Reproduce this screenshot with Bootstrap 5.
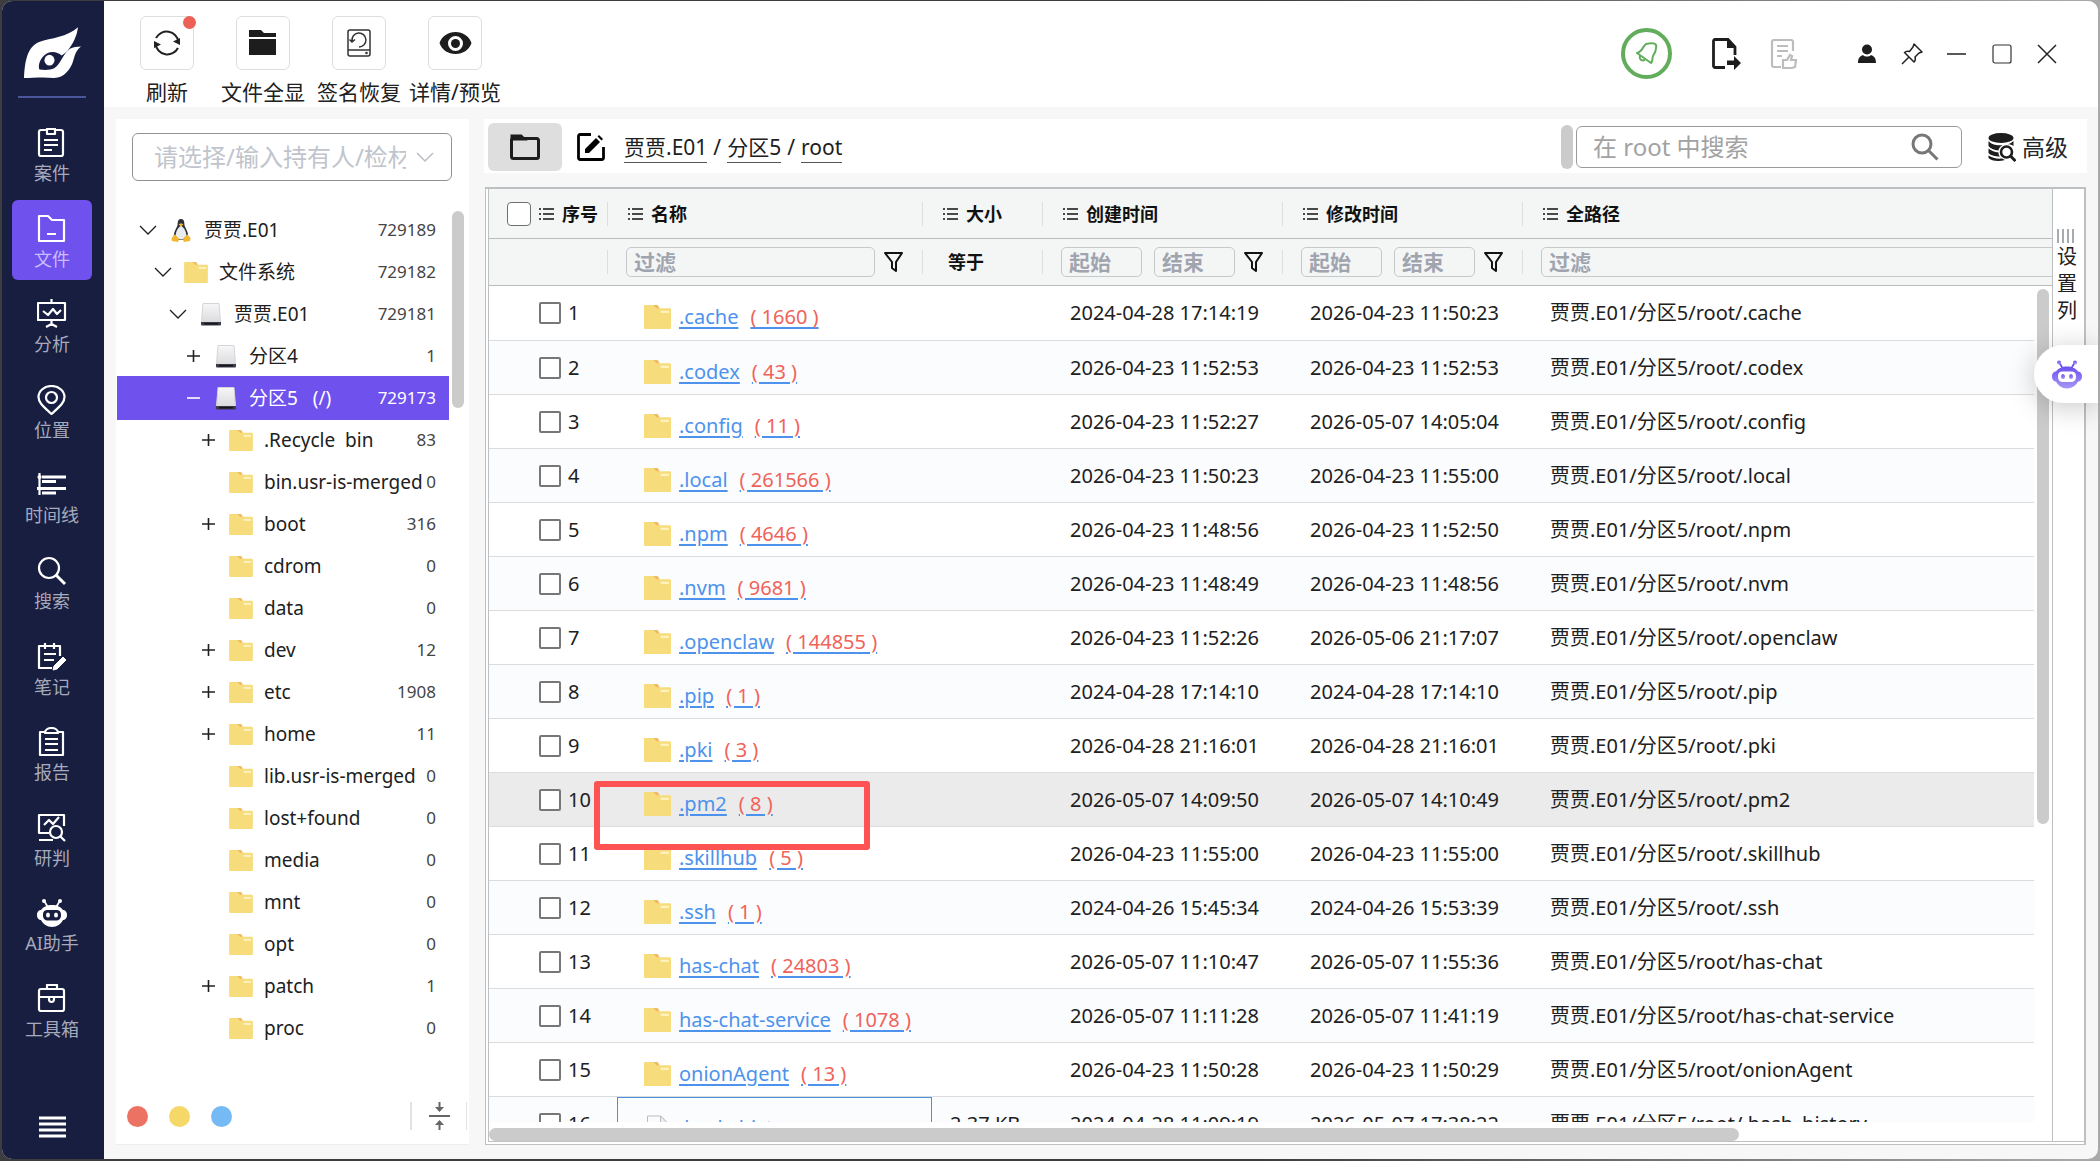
<!DOCTYPE html>
<html lang="zh-CN">
<head>
<meta charset="utf-8">
<meta name="viewport" content="width=device-width, initial-scale=1">
<title>文件 - root</title>
<link href="https://cdn.jsdelivr.net/npm/bootstrap@5.3.0/dist/css/bootstrap.min.css" rel="stylesheet">
<style>
:root{--navy:#171e40;--violet:#6f51ee;--line:#bdc1c4;--thumb:#cbcbcb;--ink:#202020}
body{font-family:"Noto Sans","Noto Sans CJK SC",sans-serif;font-size:20px;line-height:28px;color:var(--ink);
  background:linear-gradient(90deg,#3d3d3f 0,#3d3d3f 60%,#a9a9a9 99%);overflow:hidden}
button,input,select{font-family:inherit}
svg{display:block;flex:none}
.app-window{margin:1px 2px 2px;height:calc(100vh - 3px);border-radius:10px;overflow:hidden;background:#f7f7f7}
/* side navigation */
.side-nav{width:102px;padding-right:2px;background:var(--navy);color:#fff}
.side-logo{padding:26px 0 17px}
.side-rule{width:68px;height:2px;background:#4b559b}
.side-items{margin:16px 0 65px}
.side-link{width:80px;height:80px;border-radius:6px;color:#a6aabb;font-size:18px;line-height:24px;text-decoration:none;padding-top:14px;gap:3px}
.side-link svg{color:#fff}
.side-link.active{background:var(--violet);color:#c9bffa}
.side-menu{margin-bottom:20px;color:#fff}
/* top bar */
.top-bar{background:#fff;height:106px;padding:15px 29px 0 15px}
.tool-item{width:96px;font-size:21px;line-height:28px;gap:8px;white-space:nowrap}
.tool-btn{width:54px;height:54px;border:1px solid #dedede;border-radius:6px}
.tool-dot{width:13px;height:13px;background:#ec6055;top:-1px;right:-3px}
.win-btns{height:75px}
.export-btn{margin-left:40px}
.review-btn{margin:0 20px 0 24px}
.notify-btn{width:51px;height:51px;border:4px solid #62ad5c;color:#62ad5c}
.win-ctl{width:45px;height:45px}
/* tree panel */
.main-area{padding:12px 11px 14px 12px;gap:15px}
.tree-panel{width:353px;background:#fff;border-bottom:1px solid #eee}
.owner-select{margin:14px 17px 0 16px;height:48px;width:320px;border:1px solid #8f9296;border-radius:6px;font-size:24px;line-height:32px;color:#c0c4cc;padding:0 45px 0 21px;background-size:18px 18px;background-position:right 17px center;
  background-image:url("data:image/svg+xml,%3csvg xmlns='http://www.w3.org/2000/svg' viewBox='0 0 18 18'%3e%3cpath fill='none' stroke='%23b9bcc3' stroke-width='1.5' d='M1 5l8 8 8-8'/%3e%3c/svg%3e")}
.tree-list{margin:28px 20px 0 1px;font-size:19px}
.tree-row{height:42px;padding-right:13px;white-space:nowrap}
.tree-row.active{background:var(--violet);color:#fff;box-shadow:0 -1px 0 var(--violet),0 1px 0 var(--violet)}
.tree-toggle{width:24px;height:24px;color:inherit}
.tree-icon{width:24px;margin:0 11px 0 9px}
.tree-count{font-size:17px;color:#444}
.active .tree-count{color:#fff}
.thumb-v{width:12px;border-radius:6px;background:var(--thumb);right:5px;top:92px;height:197px}
.tree-foot{height:56px;padding-left:11px}
.tag-dot{width:21px;height:21px;margin-right:21px}
.foot-end{width:57px;height:28px;border-left:2px solid #e2e2e2;border-right:1px solid #e2e2e2;margin-right:2px}
/* path bar */
.path-bar{background:#fff;height:54px;padding:2px 19px 0 4px}
.path-btn{width:74px;height:48px;background:#dedede;border-radius:6px}
.edit-btn{margin:0 19px 0 15px}
.crumbs{font-size:21px;line-height:28px}
.crumbs a{color:inherit;text-decoration:none;border-bottom:1px solid #555;padding-bottom:1px}
.crumbs span{margin:0 6px}
.bar-thumb{width:12px;height:44px;border-radius:6px;background:var(--thumb);margin-right:3px}
.find-box{width:386px;height:42px;border:1px solid #9a9a9a;border-radius:6px;padding:0 22px 0 16px}
.find-box input{font-size:24px;line-height:32px;outline:0}
.find-box input::placeholder{color:#a2a2a2;opacity:1}
.adv-btn{font-size:23px;line-height:30px;gap:6px;margin-left:26px}
/* grid */
.grid-frame{border:2px solid var(--line);border-left:1px solid var(--line);border-bottom:1px solid var(--line);background:#fff;margin:14px 1px 0}
.grid-inner{border-left:1px solid var(--line);border-bottom:1px solid var(--line);margin:0 0 2px 2px}
.file-grid{table-layout:fixed;width:100%;border-collapse:separate;border-spacing:0}
.file-grid th{background:#f4f6f6;border-bottom:1px solid #b9bcbf;font-size:18px;line-height:24px;font-weight:700;color:#111;padding:0 0 0 11px;height:50px;overflow:hidden;white-space:nowrap}
.file-grid th:first-child{padding-left:18px}
.file-grid tr.filters th{height:47px;padding-left:9px}
.th-cell{height:24px;gap:8px;border-right:1px solid #dcdfe0;margin-right:9px}
.th-cell.last{border:0}
.filters .th-cell{gap:9px}
.flt{height:30px;border:1px solid #c6c9ca;border-radius:5px;background:transparent;font-size:21px;line-height:26px;font-weight:700;padding:0 7px;min-width:0}
.flt::placeholder{color:#a0a4af;opacity:1}
.flt-name{width:249px}.flt-date{width:81px}.flt-date+.flt-date{margin-left:3px}
.flt-path{width:calc(100% + 12px)}
.flt-eq{padding-left:7px}
.file-grid td{height:54px;border-bottom:1px solid #dadcdd;padding:0 0 0 18px;white-space:nowrap}
.file-grid tbody tr:first-child td{height:55px}
.file-grid td:first-child{padding-left:50px}
.file-grid td:nth-child(2){padding:8px 0 0 27px}
.file-grid td:last-child{border:0;background:#fff!important}
.file-grid tr:nth-child(even) td{background:#fbfcfe}
.file-grid tr.hovered td{background:#ebebeb}
.file-grid td.focus-cell{border:1px solid #4b8fdd;padding:8px 0 0 26px}
.head-check,.row-check{appearance:none;background:#fff;margin:0;flex:none}
.head-check{width:24px;height:24px;border:1px solid #6f6f6f;border-radius:4px}
.row-check{width:22px;height:22px;border:2px solid #777;border-radius:2px;margin-right:7px}
.file-link{color:#4d92ec;text-decoration:none;gap:12px}
.file-link span{text-decoration:underline #4d92ec 2px;text-underline-offset:3px}
.file-link .sub-count{color:#f0635a}
.grid-thumb{width:12px;border-radius:6px;background:var(--thumb);right:3px;top:100px;height:535px}
.scroll-row{height:19px;padding-top:6px}
.scroll-row div{width:80%;height:13px;border-radius:7px;background:var(--thumb)}
.col-panel{width:32px;border-left:1px solid var(--line);padding:40px 4px 0;font-size:20px;line-height:27px}
.robot-bubble{right:0;top:344px;width:64px;height:58px;background:#fff;border-radius:29px 0 0 29px;box-shadow:0 4px 28px rgba(0,0,0,.22);padding-right:16px}
.red-frame{left:592px;top:780px;width:276px;height:69px;border:6px solid #ff5252;border-radius:3px}
</style>
<script src="https://cdn.jsdelivr.net/npm/bootstrap@5.3.0/dist/js/bootstrap.bundle.min.js"></script>
</head>
<body>
<svg width="0" height="0" class="position-absolute" aria-hidden="true">
  <defs>
    <linearGradient id="gDisk" x1="0" y1="0" x2="0" y2="1"><stop offset="0" stop-color="#f7f7f8"/><stop offset="1" stop-color="#dcdce0"/></linearGradient>
    <linearGradient id="gBot" x1="0" y1="0" x2="0" y2="1"><stop offset="0" stop-color="#6f51ee"/><stop offset="1" stop-color="#a597f6"/></linearGradient>
  </defs>
  <symbol id="folder" viewBox="0 0 26 23"><path fill="#f7dc7b" d="M1 0h12l2 3h10a1 1 0 0 1 1 1v18a1 1 0 0 1-1 1H1a1 1 0 0 1-1-1V1a1 1 0 0 1 1-1z"/><path fill="#f0b963" d="M9 0h4l2 3h-3z"/><path stroke="#fff3c4" stroke-width="2" d="M16 6.500h8"/></symbol>
  <symbol id="disk" viewBox="0 0 20 23"><path fill="url(#gDisk)" stroke="#d5d5d9" d="M2 .5h16l1.500 18.500H.5z"/><path fill="#3a3c48" d="M0 19h20v2.500a1 1 0 0 1-1 1H1a1 1 0 0 1-1-1z"/><path fill="#15161d" d="M3 20h14v1.500H3z"/></symbol>
  <symbol id="tux" viewBox="0 0 20 24"><path fill="#2b3138" d="M10 0c2.500 0 3.500 2 3.500 5 0 4 4 7 4 13 0 3-3 4-7.500 4s-7.500-1-7.500-4c0-6 4-9 4-13 0-3 1-5 3.500-5z"/><path fill="#e9edf0" d="M10 7c3 2 5.500 6 5.500 10 0 3-2.500 4.500-5.500 4.500S4.500 20 4.500 17C4.500 13 7 9 10 7z"/><path fill="#f2b632" d="M7.500 5.500l2.500-1 2.500 1L10 8zM0 20l3.500-4L8 20.500 7 24l-6.500-1zM20 20l-3.500-4-4.500 4.500 1 3.500 6.500-1z"/></symbol>
  <symbol id="paper" viewBox="0 0 22 26"><path fill="#fbfbfc" stroke="#b9bcc2" d="M1 1h13l7 7v17H1z"/><path fill="#eceef1" stroke="#b9bcc2" d="M14 1v7h7z"/></symbol>
  <symbol id="lines" viewBox="0 0 15 14"><path stroke="#111" stroke-width="1.600" d="M0 2h2M4 2h11M0 7h2M4 7h11M0 12h2M4 12h11"/></symbol>
  <symbol id="funnel" viewBox="0 0 19 21"><path fill="none" stroke="#111" stroke-width="2" stroke-linejoin="round" d="M1 1h17l-6 9v9l-4-3v-6z"/></symbol>
  <symbol id="robot" viewBox="0 0 30 28"><path fill="none" stroke="currentColor" stroke-width="1.800" d="M7.500 2.500l3 5M22.500 2.500l-3 5"/><circle cx="7" cy="2" r="2" fill="currentColor"/><circle cx="23" cy="2" r="2" fill="currentColor"/><path fill="currentColor" fill-rule="evenodd" d="M15 6c5 0 9 2 11 5 2 0 4 1.500 4 5s-2 5-4 5c-2 4-6 7-11 7s-9-3-11-7c-2 0-4-1.500-4-5s2-5 4-5c2-3 6-5 11-5zM11 11c-3 0-5 1-5 5s2 5.500 5 5.500h8c3 0 5-1.500 5-5.500s-2-5-5-5z"/><ellipse cx="11" cy="16" rx="2" ry="2.500" fill="currentColor"/><ellipse cx="19" cy="16" rx="2" ry="2.500" fill="currentColor"/></symbol>
</svg>

<div class="app-window d-flex position-relative">
  <nav class="side-nav d-flex flex-column align-items-center flex-shrink-0">
    <div class="side-logo"><svg width="57" height="52" viewBox="75 80 170 155" fill="#fff"><path d="M75 232C78 180 85 140 120 125C155 113 205 110 236 81C232 110 222 128 207 148C200 157 193 162 187 165C172 150 145 150 130 170C118 185 118 200 121 207C140 209 155 208 165 203C185 192 190 160 212 145C222 139 232 139 245 138C230 150 228 160 222 180C215 205 195 232 165 232C130 228 100 232 75 232Z"/><ellipse cx="151" cy="179" rx="15" ry="16"/></svg></div>
    <div class="side-rule"></div>
    <div class="side-items flex-grow-1 d-flex flex-column justify-content-between" id="sideItems"></div>
    <button class="side-menu btn p-0 border-0" aria-label="菜单"><svg width="27" height="24" stroke="#fff" stroke-width="3"><path d="M0 3h27M0 9h27M0 15h27M0 21h27"/></svg></button>
  </nav>

  <div class="flex-grow-1 d-flex flex-column overflow-hidden">
    <header class="top-bar d-flex justify-content-between flex-shrink-0">
      <div class="d-flex">
        <div class="tool-item d-flex flex-column align-items-center"><button id="t1" class="tool-btn btn p-0 d-flex align-items-center justify-content-center position-relative"><svg width="28" height="28" fill="none" stroke="#222" stroke-width="2"><path d="M3 9A12 12 0 0 1 25.500 13M25 19A12 12 0 0 1 2.500 15"/><path fill="#222" stroke="none" d="M20 12.500l7 3.500V9zM8 15.500L1 12v7z"/></svg><i class="tool-dot position-absolute rounded-circle"></i></button><label for="t1">刷新</label></div>
        <div class="tool-item d-flex flex-column align-items-center"><button id="t2" class="tool-btn btn p-0 d-flex align-items-center justify-content-center"><svg width="28" height="26" fill="#1d1d1d"><path d="M0 0h12l3 3h12v4H0zM0 9h27v16H0z"/></svg></button><label for="t2">文件全显</label></div>
        <div class="tool-item d-flex flex-column align-items-center"><button id="t3" class="tool-btn btn p-0 d-flex align-items-center justify-content-center"><svg width="24" height="28" fill="none" stroke="#333" stroke-width="1.500"><rect x="1" y="1" width="22" height="26" rx="2"/><path d="M1 21h22M5 12a7 7 0 1 1 7 6M2.500 10.500L5 13l3-2.500"/><circle cx="19.500" cy="24" r=".6"/></svg></button><label for="t3">签名恢复</label></div>
        <div class="tool-item d-flex flex-column align-items-center"><button id="t4" class="tool-btn btn p-0 d-flex align-items-center justify-content-center"><svg width="33" height="24" fill="#1d1d1d"><path fill-rule="evenodd" d="M16.500 1C24 1 30 5 32.500 12 30 19 24 23 16.500 23S3 19 .5 12C3 5 9 1 16.500 1zm0 4a7.500 7.500 0 1 0 0 15 7.500 7.500 0 0 0 0-15z"/><circle cx="16.500" cy="12.500" r="4.500"/></svg></button><label for="t4">详情/预览</label></div>
      </div>
      <div class="win-btns d-flex align-items-center">
        <button class="notify-btn btn p-0 rounded-circle d-flex align-items-center justify-content-center" aria-label="通知"><svg width="24" height="24" fill="none" stroke="currentColor" stroke-width="2" stroke-linejoin="round"><path d="M2 11c5-1 6-7 9-9 4-1 9-1 10 1 1 5-1 8-3 11-1 3 0 5-2 7L2 11zM5 14c-1 4 2 5 5 4"/></svg></button>
        <button class="export-btn btn p-0 border-0" aria-label="导出"><svg width="30" height="32" viewBox="0 0 30 32"><path fill="none" stroke="#1d1d1d" stroke-width="2.800" d="M13 29.500H3a1.500 1.500 0 0 1-1.500-1.500V3A1.500 1.500 0 0 1 3 1.500h13l7 7.500v8"/><path fill="#1d1d1d" d="M15 1v9h9v-1.500L16.500 1zM15 22.500h7V18l7 7-7 7v-5h-7z"/></svg></button>
        <button class="review-btn btn p-0 border-0" aria-label="审批"><svg width="30" height="32" viewBox="0 0 30 32" fill="none" stroke="#bdbdbd" stroke-width="2.200" class="ms-1"><path d="M11 29H4a2 2 0 0 1-2-2V4a2 2 0 0 1 2-2h17a2 2 0 0 1 2 2v9M7 8h11M7 13h11M7 18h5M13 22v8h9l3-1 1-7h-5l1-4-2-1-3 5z"/></svg></button>
        <div class="d-flex ms-4">
          <button class="win-ctl btn p-0 border-0 d-flex align-items-center justify-content-center" aria-label="用户"><svg width="18" height="19" fill="#1d1d1d"><circle cx="9" cy="5.500" r="5"/><path d="M0 19c0-5 2-7 5-8 2 2 6 2 8 0 3 1 5 3 5 8z"/></svg></button>
          <button class="win-ctl btn p-0 border-0 d-flex align-items-center justify-content-center" aria-label="置顶"><svg width="22" height="22" fill="none" stroke="#222" stroke-width="1.500" stroke-linejoin="round"><path d="M13 1l8 8-3 1-4 4c1 3 0 4-1 5L3.500 9.500C5 8 7 8 8.500 8.500L12 4zM8 14l-7 7"/></svg></button>
          <button class="win-ctl btn p-0 border-0 d-flex align-items-center justify-content-center" aria-label="最小化"><svg width="19" height="20" stroke="#222" stroke-width="1.500"><path d="M0 10h19"/></svg></button>
          <button class="win-ctl btn p-0 border-0 d-flex align-items-center justify-content-center" aria-label="最大化"><svg width="20" height="20" fill="none" stroke="#333" stroke-width="1.200"><rect x="1" y="1" width="18" height="18" rx="2"/></svg></button>
          <button class="win-ctl btn p-0 border-0 d-flex align-items-center justify-content-center" aria-label="关闭"><svg width="20" height="20" stroke="#222" stroke-width="1.500"><path d="M1 1l18 18M19 1L1 19"/></svg></button>
        </div>
      </div>
    </header>

    <div class="main-area flex-grow-1 d-flex overflow-hidden">
      <aside class="tree-panel d-flex flex-column position-relative flex-shrink-0">
        <select class="owner-select form-select" aria-label="持有人/检材"><option>请选择/输入持有人/检材</option></select>
        <div class="tree-list flex-grow-1 overflow-visible" id="tree"></div>
        <div class="thumb-v position-absolute"></div>
        <div class="tree-foot d-flex align-items-center">
          <i class="tag-dot rounded-circle" style="background:#ec7263"></i><i class="tag-dot rounded-circle" style="background:#f6d869"></i><i class="tag-dot rounded-circle" style="background:#75baf5"></i>
          <button class="foot-end btn p-0 rounded-0 border-top-0 border-bottom-0 ms-auto d-flex align-items-center justify-content-center" aria-label="全部折叠"><svg width="21" height="28" fill="#666"><path d="M0 13h21v2H0zM9.500 0h2v5H15l-4.500 5L6 5h3.500zM9.500 28h2v-5H15l-4.500-5L6 23h3.500z"/></svg></button>
        </div>
      </aside>

      <main class="flex-grow-1 d-flex flex-column overflow-hidden">
        <div class="path-bar d-flex align-items-center flex-shrink-0">
          <button class="path-btn btn p-0 d-flex align-items-center justify-content-center" aria-label="目录"><svg width="30" height="26" fill="none" stroke="#1d1d1d" stroke-width="3"><path fill="#1d1d1d" d="M2 5V2h9l3 3z"/><rect x="1.500" y="4.500" width="27" height="20" rx="2"/></svg></button>
          <button class="edit-btn btn p-0 border-0" aria-label="编辑路径"><svg width="28" height="28" fill="none" stroke="#000" stroke-width="2.800"><path d="M14 1.500H3A1.500 1.500 0 0 0 1.500 3v22A1.500 1.500 0 0 0 3 26.500h22a1.500 1.500 0 0 0 1.500-1.500V14"/><path fill="#000" stroke="none" d="M8 20v-4L19 5l4 4-11 11zM20.500 3.500L22 2l4 4-1.500 1.500z"/></svg></button>
          <div class="crumbs"><a href="#">贾贾.E01</a><span>/</span><a href="#">分区5</a><span>/</span><a href="#">root</a></div>
          <div class="d-flex align-items-center ms-auto">
            <div class="bar-thumb"></div>
            <div class="find-box d-flex align-items-center"><input class="border-0 p-0 flex-grow-1 w-50" type="text" aria-label="搜索" placeholder="在 root 中搜索"><svg width="28" height="28" fill="none" stroke="#777" stroke-width="3"><circle cx="11" cy="11" r="9"/><path d="M17.500 17.500l9 9"/></svg></div>
            <button class="adv-btn btn p-0 border-0 d-flex align-items-center"><svg width="28" height="29" viewBox="0 0 28 29" fill="#1d1d1d"><ellipse cx="13" cy="5" rx="12.500" ry="5"/><path d="M.5 8c3 4 10 5 14 4-3 2-4 4-4 5.500C6 17 2 15.500.5 13zM.5 15.500c3 2.500 6 3.500 10 4 0 2 .5 3 1.500 4C7 23.500 2 22 .5 20zM.5 22.500C4 25 9 26 14 25.500l3 1.500C11 29 3 28 .5 25zM25.500 8v5c-2-1.500-5-2-7-1.500 3-.5 5-1.500 7-3.500z"/><circle cx="18.500" cy="19" r="5.500" fill="none" stroke="#1d1d1d" stroke-width="2.600"/><path stroke="#1d1d1d" stroke-width="3" d="M22.500 23l5 5"/></svg><span>高级</span></button>
          </div>
        </div>

        <div class="grid-frame flex-grow-1 d-flex overflow-hidden">
          <div class="grid-inner flex-grow-1 d-flex overflow-hidden">
            <div class="flex-grow-1 d-flex flex-column overflow-hidden position-relative">
              <div class="flex-grow-1 overflow-hidden">
                <table class="file-grid">
                  <colgroup><col style="width:128px"><col style="width:315px"><col style="width:120px"><col style="width:240px"><col style="width:240px"><col><col style="width:18px"></colgroup>
                  <thead>
                    <tr>
                      <th><div class="th-cell d-flex align-items-center"><input class="head-check" type="checkbox" aria-label="全选"><svg width="15" height="14"><use href="#lines"/></svg>序号</div></th>
                      <th><div class="th-cell d-flex align-items-center"><svg width="15" height="14"><use href="#lines"/></svg>名称</div></th>
                      <th><div class="th-cell d-flex align-items-center"><svg width="15" height="14"><use href="#lines"/></svg>大小</div></th>
                      <th><div class="th-cell d-flex align-items-center"><svg width="15" height="14"><use href="#lines"/></svg>创建时间</div></th>
                      <th><div class="th-cell d-flex align-items-center"><svg width="15" height="14"><use href="#lines"/></svg>修改时间</div></th>
                      <th colspan="2"><div class="th-cell last d-flex align-items-center"><svg width="15" height="14"><use href="#lines"/></svg>全路径</div></th>
                    </tr>
                    <tr class="filters">
                      <th><div class="th-cell"></div></th>
                      <th><div class="th-cell d-flex align-items-center"><input class="flt flt-name" placeholder="过滤" aria-label="名称过滤"><svg width="19" height="21"><use href="#funnel"/></svg></div></th>
                      <th><div class="th-cell flt-eq d-flex align-items-center">等于</div></th>
                      <th><div class="th-cell d-flex align-items-center"><input class="flt flt-date" placeholder="起始" aria-label="创建时间起始"><input class="flt flt-date" placeholder="结束" aria-label="创建时间结束"><svg width="19" height="21"><use href="#funnel"/></svg></div></th>
                      <th><div class="th-cell d-flex align-items-center"><input class="flt flt-date" placeholder="起始" aria-label="修改时间起始"><input class="flt flt-date" placeholder="结束" aria-label="修改时间结束"><svg width="19" height="21"><use href="#funnel"/></svg></div></th>
                      <th colspan="2"><input class="flt flt-path d-block" placeholder="过滤" aria-label="全路径过滤"></th>
                    </tr>
                  </thead>
                  <tbody id="rows"></tbody>
                </table>
              </div>
              <div class="scroll-row flex-shrink-0"><div></div></div>
              <div class="grid-thumb position-absolute"></div>
            </div>
            <div class="col-panel flex-shrink-0">
              <svg width="17" height="14" stroke="#8b8f92" stroke-width="1.500"><path d="M1 0v14M6 0v14M11 0v14M16 0v14"/></svg>
              <div>设<br>置<br>列</div>
            </div>
          </div>
        </div>
      </main>
    </div>
  </div>

  <button class="robot-bubble btn border-0 position-absolute d-flex align-items-center justify-content-end" aria-label="AI助手"><svg width="30" height="29" viewBox="0 0 30 28" fill="url(#gBot)"><path stroke="#6f51ee" stroke-width="1.800" d="M7.500 2.500l3 5M22.500 2.500l-3 5"/><circle cx="7" cy="2" r="2"/><circle cx="23" cy="2" r="2"/><path fill-rule="evenodd" d="M15 6c5 0 9 2 11 5 2 0 4 1.500 4 5s-2 5-4 5c-2 4-6 7-11 7s-9-3-11-7c-2 0-4-1.500-4-5s2-5 4-5c2-3 6-5 11-5zM11 11c-3 0-5 1-5 5s2 5.500 5 5.500h8c3 0 5-1.500 5-5.500s-2-5-5-5z"/><ellipse cx="11" cy="16" rx="2" ry="2.500"/><ellipse cx="19" cy="16" rx="2" ry="2.500"/></svg></button>
  <div class="red-frame position-absolute pe-none"></div>
</div>

<script>
const nav = [
  ['案件','<path d="M10 2H4a2 2 0 0 0-2 2v22a2 2 0 0 0 2 2h20a2 2 0 0 0 2-2V4a2 2 0 0 0-2-2h-6M10 1v5h8V1zM7 12h14M7 17h14M7 22h8"/>'],
  ['文件','<path d="M2 2h9l4 4h12v21H2zM10 20h9"/>'],
  ['分析','<path d="M1 4h27v17H1zM14.500 0v4M14.500 21v6M9 28l5.500-3 5.500 3M6 12l5 4 5-6 4 5 4-4"/>'],
  ['位置','<path d="M14.500 29C7 22 1.500 18 1.500 12a13 11 0 0 1 26 0c0 6-5.500 10-13 17z"/><circle cx="14.500" cy="12.500" r="5.500"/>'],
  ['时间线','<path stroke-width="3" d="M5 7h24M5 11.500h14M0 18.500h29M5 23h14"/><path d="M2.500 3v22"/><circle cx="2.500" cy="7" r="1"/>'],
  ['搜索','<circle cx="12" cy="12" r="10"/><path stroke-width="3" d="M19 19l9 9"/>'],
  ['笔记','<path d="M15 26H2V4h21v10M8 1v6M17 1v6M7 12h12M7 18h10"/><path fill="#fff" stroke-width="1" d="M16 28l1-4 9-9 3 3-9 9z"/>'],
  ['报告','<path d="M8 5H3v23h23V5h-5M8 6c0-3 3-5 6.500-5S21 3 21 6zM8 12h13M8 17h13M8 23h13"/>'],
  ['研判','<path d="M12 20H2V2h25v11M7 12l5-5 4 4 6-7M2 27h14"/><circle cx="19" cy="19" r="6"/><path d="M23 23l5 5"/>'],
  ['AI助手','bot'],
  ['工具箱','<rect x="2" y="5" width="25" height="22" rx="2"/><path d="M10 5V1h10v4M2 13h25M12 13v2a2.500 3 0 0 0 5 0v-2"/>']
];
document.getElementById('sideItems').innerHTML = nav.map(([t, p], i) =>
  `<a href="#" class="side-link d-flex flex-column align-items-center${i === 1 ? ' active' : ''}">` +
  (p === 'bot' ? '<svg width="30" height="30"><use href="#robot"/></svg>'
    : `<svg width="30" height="30" fill="none" stroke="currentColor" stroke-width="2.2" stroke-linejoin="round">${p}</svg>`) +
  `<span>${t}</span></a>`).join('');

// [level, toggle, icon, label, count]
const tree = [
  [0,'v','tux','贾贾.E01',729189],[1,'v','folder','文件系统',729182],[2,'v','disk','贾贾.E01',729181],
  [3,'+','disk','分区4',1],[3,'-','disk','分区5&nbsp;&nbsp; (/)',729173],
  [4,'+','folder','.Recycle&nbsp; bin',83],[4,'','folder','bin.usr-is-merged',0],[4,'+','folder','boot',316],
  [4,'','folder','cdrom',0],[4,'','folder','data',0],[4,'+','folder','dev',12],[4,'+','folder','etc',1908],
  [4,'+','folder','home',11],[4,'','folder','lib.usr-is-merged',0],[4,'','folder','lost+found',0],
  [4,'','folder','media',0],[4,'','folder','mnt',0],[4,'','folder','opt',0],[4,'+','folder','patch',1],[4,'','folder','proc',0]
];
const marks = {
  'v':'<path d="M4 8l8 8 8-8" stroke-width="1.3"/>',
  '+':'<path d="M6 12h13M12.500 6v12" stroke-width="1.6"/>',
  '-':'<path d="M6 12h13" stroke-width="1.6"/>'
};
document.getElementById('tree').innerHTML = tree.map(([l, m, ic, t, c]) =>
  `<div class="tree-row d-flex align-items-center${m === '-' ? ' active' : ''}" style="padding-left:${19 + 15 * l}px">` +
  (m ? `<button class="tree-toggle btn p-0 border-0" aria-label="展开"><svg width="24" height="24" fill="none" stroke="currentColor">${marks[m]}</svg></button>` : '<span class="tree-toggle"></span>') +
  `<svg class="tree-icon" height="${ic === 'folder' ? 21 : 23}"><use href="#${ic}"/></svg><span>${t}</span><span class="tree-count ms-auto">${c}</span></div>`).join('');

const files = [
  ['.cache',1660,'2024-04-28 17:14:19','2026-04-23 11:50:23'],
  ['.codex',43,'2026-04-23 11:52:53','2026-04-23 11:52:53'],
  ['.config',11,'2026-04-23 11:52:27','2026-05-07 14:05:04'],
  ['.local',261566,'2026-04-23 11:50:23','2026-04-23 11:55:00'],
  ['.npm',4646,'2026-04-23 11:48:56','2026-04-23 11:52:50'],
  ['.nvm',9681,'2026-04-23 11:48:49','2026-04-23 11:48:56'],
  ['.openclaw',144855,'2026-04-23 11:52:26','2026-05-06 21:17:07'],
  ['.pip',1,'2024-04-28 17:14:10','2024-04-28 17:14:10'],
  ['.pki',3,'2026-04-28 21:16:01','2026-04-28 21:16:01'],
  ['.pm2',8,'2026-05-07 14:09:50','2026-05-07 14:10:49'],
  ['.skillhub',5,'2026-04-23 11:55:00','2026-04-23 11:55:00'],
  ['.ssh',1,'2024-04-26 15:45:34','2024-04-26 15:53:39'],
  ['has-chat',24803,'2026-05-07 11:10:47','2026-05-07 11:55:36'],
  ['has-chat-service',1078,'2026-05-07 11:11:28','2026-05-07 11:41:19'],
  ['onionAgent',13,'2026-04-23 11:50:28','2026-04-23 11:50:29'],
  ['.bash_history',null,'2024-04-28 11:09:19','2026-05-07 17:38:22']
];
document.getElementById('rows').innerHTML = files.map(([n, c, a, b], i) =>
  `<tr${i === 9 ? ' class="hovered"' : ''}><td><div class="d-flex align-items-center"><input class="row-check" type="checkbox" id="r${i}"><label for="r${i}">${i + 1}</label></div></td>` +
  `<td${c === null ? ' class="focus-cell"' : ''}><div class="d-flex align-items-center"><svg width="27" height="${c === null ? 26 : 24}" class="me-2"><use href="#${c === null ? 'paper' : 'folder'}"/></svg>` +
  `<a href="#" class="file-link d-flex"><span>${n}</span>${c === null ? '' : `<span class="sub-count">( ${c} )</span>`}</a></div></td>` +
  `<td>${c === null ? '2.37 KB' : ''}</td><td>${a}</td><td>${b}</td><td>贾贾.E01/分区5/root/${n}</td><td></td></tr>`).join('');
</script>
</body>
</html>
